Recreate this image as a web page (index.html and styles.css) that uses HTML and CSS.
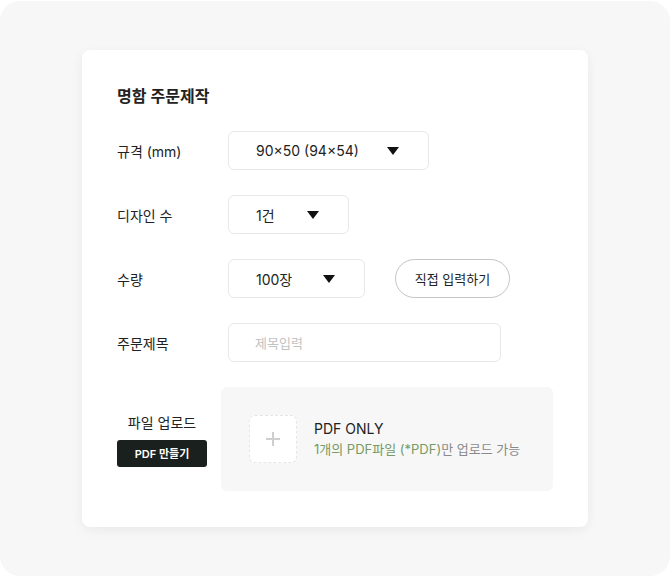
FILE: index.html
```html
<!DOCTYPE html>
<html lang="ko">
<head>
    <meta charset="UTF-8">
    <meta name="viewport" content="width=device-width, initial-scale=1.0">
    <title>명함 주문제작</title>
    <link rel="stylesheet" href="styles.css">
</head>
<body>
    <div class="frame">
        <div class="card">
            <h2 class="card-title">명함 주문제작</h2>

            <div class="form-row">
                <label class="form-label">규격 (mm)</label>
                <div class="select select-size">
                    <span>90×50 (94×54)</span>
                    <span class="caret"></span>
                </div>
            </div>

            <div class="form-row">
                <label class="form-label">디자인 수</label>
                <div class="select select-design">
                    <span>1건</span>
                    <span class="caret"></span>
                </div>
            </div>

            <div class="form-row">
                <label class="form-label">수량</label>
                <div class="select select-qty">
                    <span>100장</span>
                    <span class="caret"></span>
                </div>
                <button class="pill-btn">직접 입력하기</button>
            </div>

            <div class="form-row">
                <label class="form-label">주문제목</label>
                <input class="text-input" type="text" placeholder="제목입력">
            </div>

            <div class="upload-row">
                <div class="upload-label">
                    <p>파일 업로드</p>
                    <button class="dark-btn">PDF 만들기</button>
                </div>
                <div class="upload-area">
                    <div class="plus-box">
                        <svg width="16" height="16" viewBox="0 0 16 16">
                            <path d="M8 1v14M1 8h14" stroke="#cfcfcf" stroke-width="2"/>
                        </svg>
                    </div>
                    <div class="upload-text">
                        <p class="upload-title">PDF ONLY</p>
                        <p class="upload-desc"><span class="green">1개의 PDF파일 (*PDF)</span>만 업로드 가능</p>
                    </div>
                </div>
            </div>
        </div>
    </div>
</body>
</html>
```

FILE: styles.css
```css
body {
    margin: 0;
    background-color: #fff;
    font-family: 'Inter', 'Noto Sans CJK KR', sans-serif;
    color: #222;
}

.frame {
    width: 670px;
    height: 575px;
    margin-top: 1px;
    padding-top: 49px;
    box-sizing: border-box;
    background-color: #f7f7f7;
    border-radius: 20px;
}

.card {
    width: 506px;
    height: 477px;
    margin-left: 82px;
    padding: 35px 35px 35px 35px;
    box-sizing: border-box;
    background-color: #fff;
    border-radius: 8px;
    box-shadow: 0 3px 12px rgba(0, 0, 0, 0.06);
}

.card-title {
    margin: 0 0 24px;
    font-size: 16px;
    line-height: 22px;
    font-weight: 600;
}

.form-row {
    display: flex;
    align-items: center;
    margin-bottom: 25px;
}

.form-label {
    width: 111px;
    font-size: 14px;
}

.select {
    height: 39px;
    box-sizing: border-box;
    display: flex;
    align-items: center;
    justify-content: space-between;
    padding: 0 29px 0 27px;
    border: 1px solid #e8e8e8;
    border-radius: 6px;
    font-size: 14px;
}

.select-size {
    width: 201px;
}

.select-design {
    width: 121px;
}

.select-qty {
    width: 137px;
}

.caret {
    width: 0;
    height: 0;
    border-left: 6px solid transparent;
    border-right: 6px solid transparent;
    border-top: 8px solid #111;
}

.pill-btn {
    margin-left: 30px;
    width: 115px;
    height: 39px;
    background-color: #fff;
    border: 1px solid #c4c4c4;
    border-radius: 20px;
    font-family: inherit;
    font-size: 13px;
    color: #222;
}

.text-input {
    width: 273px;
    height: 39px;
    box-sizing: border-box;
    padding: 0 26px;
    border: 1px solid #e8e8e8;
    border-radius: 6px;
    font-family: inherit;
    font-size: 13px;
    outline: none;
}

.text-input::placeholder {
    color: #c2c2c2;
}

.upload-row {
    display: flex;
    align-items: center;
}

.upload-label {
    width: 90px;
    margin-right: 14px;
    text-align: center;
}

.upload-label p {
    margin: 0 0 8px;
    font-size: 14px;
}

.dark-btn {
    width: 90px;
    height: 27px;
    background-color: #1a201e;
    color: #fff;
    border: none;
    border-radius: 3px;
    font-family: inherit;
    font-size: 11px;
    font-weight: 600;
}

.upload-area {
    width: 332px;
    height: 104px;
    box-sizing: border-box;
    padding: 0 28px;
    display: flex;
    align-items: center;
    background-color: #f7f7f7;
    border-radius: 6px;
}

.plus-box {
    width: 48px;
    height: 48px;
    box-sizing: border-box;
    display: flex;
    align-items: center;
    justify-content: center;
    background-color: #fff;
    border: 1px dashed #e6e6e6;
    border-radius: 6px;
    margin-right: 17px;
}

.upload-text p {
    margin: 0;
}

.upload-title {
    font-size: 14px;
    line-height: 20px;
}

.upload-desc {
    font-size: 13px;
    line-height: 20px;
    color: #8a8a8a;
}

.green {
    color: #759a63;
}
```
